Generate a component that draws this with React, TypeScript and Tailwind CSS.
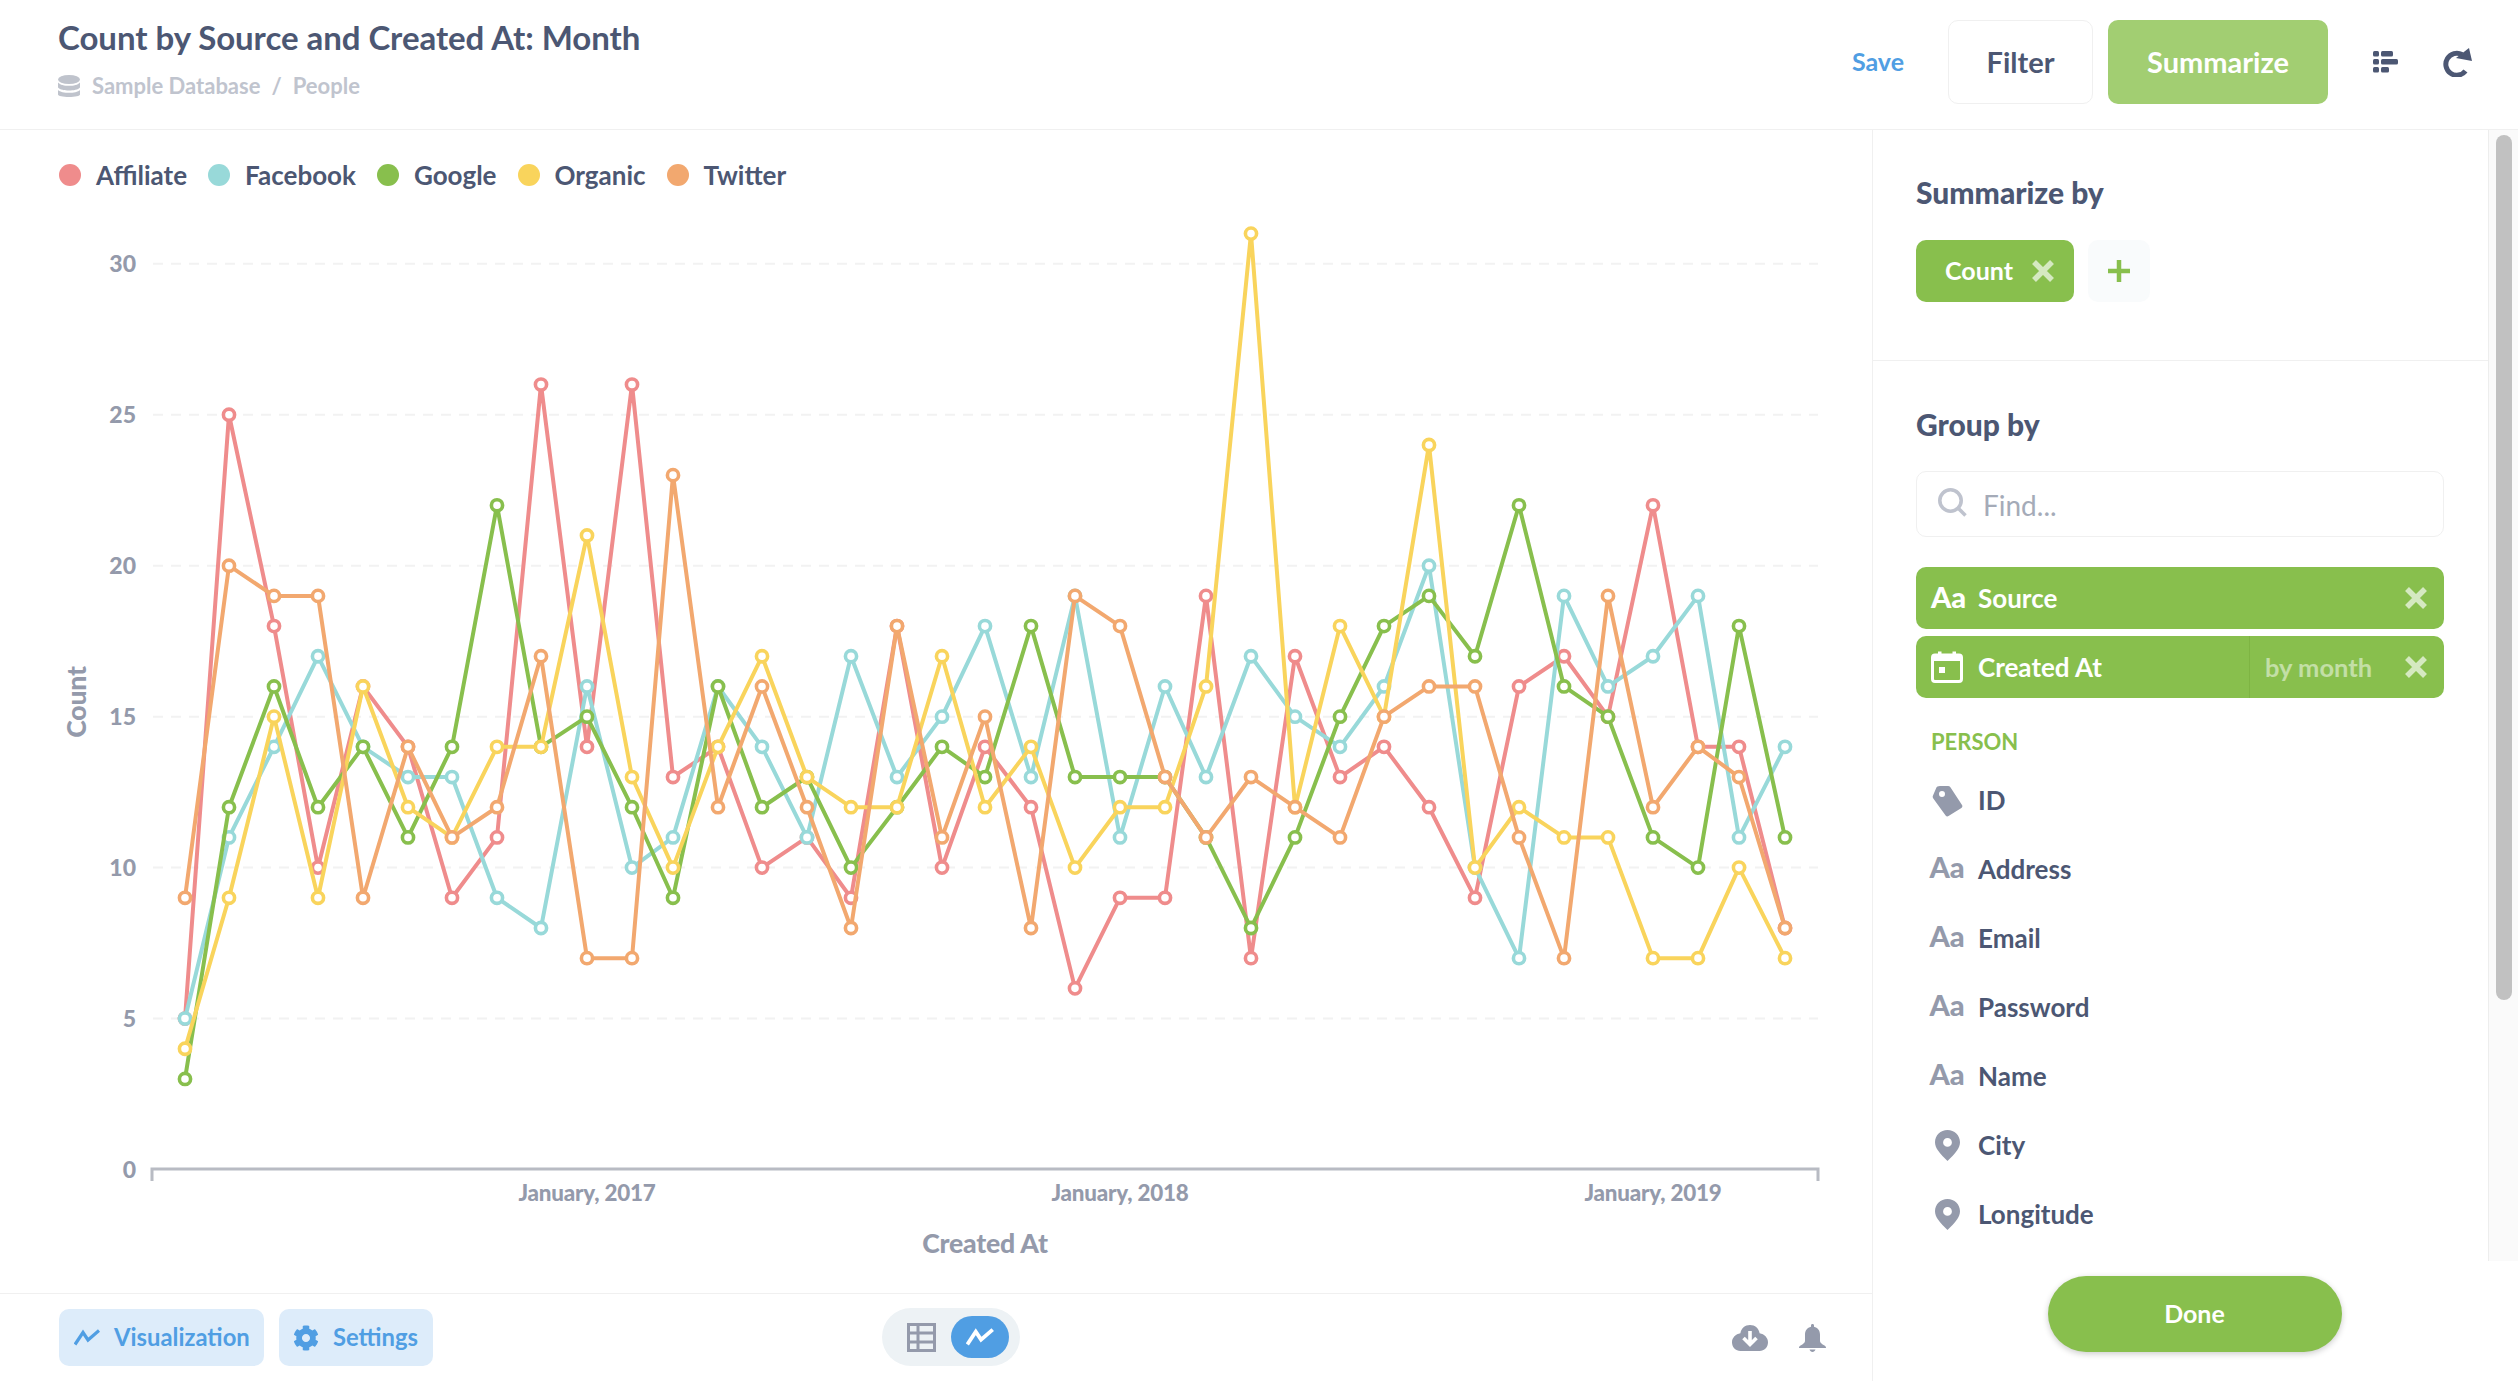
import React from "react";
import { FaCog } from "react-icons/fa";

const xs = [185,229,274,318,363,408,452,497,541,587,632,673,718,762,807,851,897,942,985,1031,1075,1120,1165,1206,1251,1295,1340,1384,1429,1475,1519,1564,1608,1653,1698,1739,1785];
const series = [
  { name: "Affiliate", color: "#EF8C8C", data: [5,25,18,10,16,14,9,11,26,14,26,13,14,10,11,9,18,10,14,12,6,9,9,19,7,17,13,14,12,9,16,17,15,22,14,14,8] },
  { name: "Facebook", color: "#98D9D9", data: [5,11,14,17,14,13,13,9,8,16,10,11,16,14,11,17,13,15,18,13,19,11,16,13,17,15,14,16,20,10,7,19,16,17,19,11,14] },
  { name: "Google", color: "#88BF4D", data: [3,12,16,12,14,11,14,22,14,15,12,9,16,12,13,10,12,14,13,18,13,13,13,11,8,11,15,18,19,17,22,16,15,11,10,18,11] },
  { name: "Organic", color: "#F9D45C", data: [4,9,15,9,16,12,11,14,14,21,13,10,14,17,13,12,12,17,12,14,10,12,12,16,31,12,18,15,24,10,12,11,11,7,7,10,7] },
  { name: "Twitter", color: "#F2A86F", data: [9,20,19,19,9,14,11,12,17,7,7,23,12,16,12,8,18,11,15,8,19,18,13,11,13,12,11,15,16,16,11,7,19,12,14,13,8] },
];
const yOf = (v: number) => 1169.5 - v * 30.19;

function Chart() {
  return (
    <svg className="block w-[1873px] h-[1073px]" viewBox="0 220 1873 1073">
      {[5, 10, 15, 20, 25, 30].map((v) => (
        <line key={v} x1={153} x2={1818} y1={yOf(v)} y2={yOf(v)} stroke="#F2F2F2" strokeWidth={2} strokeDasharray="10 8" />
      ))}
      {[0, 5, 10, 15, 20, 25, 30].map((v) => (
        <text key={v} x={136} y={yOf(v) + 8.5} textAnchor="end" fontSize={23} fontWeight={900} fill="#949AAB">{v}</text>
      ))}
      <path d="M152 1181 V1169 H1818 V1181" fill="none" stroke="#B8BBC3" strokeWidth={3} />
      {[["January, 2017", 587], ["January, 2018", 1120], ["January, 2019", 1653]].map(([t, x]) => (
        <text key={t as string} x={x as number} y={1201} textAnchor="middle" fontSize={22.4} fontWeight={900} fill="#949AAB" letterSpacing={-0.2}>{t}</text>
      ))}
      <text x={985} y={1253} textAnchor="middle" fontSize={26.6} fontWeight={900} fill="#949AAB" letterSpacing={-0.2}>Created At</text>
      <text transform="translate(86 702) rotate(-90)" textAnchor="middle" fontSize={26.6} fontWeight={900} fill="#949AAB" letterSpacing={-0.2}>Count</text>
      {series.map((s) => (
        <g key={s.name}>
          <polyline points={s.data.map((v, i) => `${xs[i]},${yOf(v)}`).join(" ")} fill="none" stroke={s.color} strokeWidth={4} strokeLinejoin="round" />
          {s.data.map((v, i) => (
            <circle key={i} cx={xs[i]} cy={yOf(v)} r={5.6} fill="#fff" stroke={s.color} strokeWidth={3.6} />
          ))}
        </g>
      ))}
    </svg>
  );
}

function Cross({ className = "" }: { className?: string }) {
  return (
    <svg viewBox="0 0 22 22" className={`w-[22px] h-[22px] shrink-0 ${className}`}>
      <path d="M2 2 L20 20 M20 2 L2 20" stroke="#fff" strokeOpacity={0.65} strokeWidth={5.5} fill="none" />
    </svg>
  );
}

function Pin() {
  return (
    <svg viewBox="0 0 25 31" className="w-[25px] h-[31px]">
      <path fillRule="evenodd" fill="#949AAB" d="M12.5 0C5.6 0 0 5.4 0 12.2c0 3.2 1.4 6 3 8.3 2.5 3.6 6.3 7.4 9.5 10.5 3.2-3.1 7-6.9 9.5-10.5 1.6-2.3 3-5.1 3-8.3C25 5.4 19.4 0 12.5 0zm0 8a4.4 4.4 0 1 1 0 8.8 4.4 4.4 0 0 1 0-8.8z" />
    </svg>
  );
}

function Tag() {
  return (
    <svg viewBox="0 0 32 32" className="w-[32px] h-[32px]">
      <path fillRule="evenodd" fill="#949AAB" d="M9 1h8c1 0 1.8.4 2.4 1.2L31 20c.7 1 .5 2.2-.6 2.9L17.5 31c-1 .7-2.2.4-2.9-.6L2.3 13.4C1.7 12.6 1.6 12 1.8 11L5 3.4C5.6 1.800 7 1 9 1zm2 5a3 3 0 1 0 0 6 3 3 0 0 0 0-6z" />
    </svg>
  );
}

function Aa({ white = false }: { white?: boolean }) {
  return <span className={`text-[29px] leading-none font-black -mt-[6px] ${white ? "text-white" : "text-[#949AAB]"}`}>Aa</span>;
}

const rows: [string, "aa" | "pin" | "tag"][] = [
  ["ID", "tag"],
  ["Address", "aa"],
  ["Email", "aa"],
  ["Password", "aa"],
  ["Name", "aa"],
  ["City", "pin"],
  ["Longitude", "pin"],
];

export default function App() {
  return (
    <div className="w-[2518px] h-[1381px] flex flex-col overflow-hidden bg-white text-[#4C5773] font-[Lato,sans-serif]">
      <header className="h-[130px] shrink-0 border-b border-[#F0F0F0] flex items-center pl-[58px]">
        <div className="flex flex-col -mt-[12px]">
          <h1 className="text-[33px] leading-[40px] font-bold tracking-[-0.05px]">Count by Source and Created At: Month</h1>
          <div className="flex items-center mt-[15px] text-[22px] leading-[28px] font-bold text-[#C0C4CE]">
            <svg viewBox="0 0 22 22" className="w-[22px] h-[22px] mr-[12px]">
              <ellipse cx="11" cy="4.500" rx="11" ry="4.500" fill="#BFC3CC" />
              <path d="M0 7.500c2 2.500 6.500 3.300 11 3.300s9-.8 11-3.300v5c-2 2.200-6.500 3-11 3s-9-.8-11-3z" fill="#BFC3CC" />
              <path d="M0 15c2 2 6.500 2.800 11 2.800S20 17 22 15v4.500c0 1.500-5 2.500-11 2.500S0 21 0 19.500z" fill="#BFC3CC" />
            </svg>
            <span>Sample Database</span>
            <span className="mx-[11px]">/</span>
            <span>People</span>
          </div>
        </div>
        <div className="ml-auto flex items-center pr-[46px] -mt-[5px]">
          <span className="text-[25px] font-bold text-[#509EE3] mr-[44px]">Save</span>
          <div className="w-[145px] h-[84px] rounded-[10px] border border-[#F0F0F0] flex items-center justify-center text-[29px] font-bold">Filter</div>
          <div className="w-[220px] h-[84px] rounded-[10px] bg-[#A2CE72] ml-[15px] flex items-center justify-center text-[29px] font-bold text-white">Summarize</div>
          <svg viewBox="0 0 25 22" className="w-[25px] h-[22px] ml-[45px]" fill="#4C5773">
            <rect x="0" y="0" width="6" height="5.500" rx="1.500" />
            <rect x="8" y="0" width="12" height="5.500" rx="1.500" />
            <rect x="0" y="8" width="6" height="5.500" rx="1.500" />
            <rect x="8" y="8" width="17" height="5.500" rx="1.500" />
            <rect x="0" y="16" width="6" height="5.500" rx="1.500" />
            <rect x="8" y="16" width="8" height="5.500" rx="1.500" />
          </svg>
          <svg viewBox="0 0 29 29" className="w-[29px] h-[29px] ml-[45px]" fill="none">
            <path d="M19 6.500A11 11 0 1 0 22.500 23" stroke="#4C5773" strokeWidth={5} />
            <path d="M26 0 L29 13 L13 10 Z" fill="#4C5773" />
          </svg>
        </div>
      </header>

      <main className="flex flex-1 min-h-0">
        <section className="w-[1873px] shrink-0 border-r border-[#F0F0F0] flex flex-col">
          <div className="h-[90px] flex items-center pl-[59px] gap-[21px] text-[26px] font-bold">
            {series.map((s) => (
              <div key={s.name} className="flex items-center gap-[15px]">
                <span className="w-[22px] h-[22px] rounded-full" style={{ backgroundColor: s.color }} />
                <span>{s.name}</span>
              </div>
            ))}
          </div>
          <Chart />
          <div className="h-[88px] shrink-0 border-t border-[#F0F0F0] flex items-start pt-[15px] pl-[59px] pr-[46px]">
            <div className="w-[823px] flex gap-[15px]">
              <div className="w-[205px] h-[57px] rounded-[10px] bg-[#DDECFA] flex items-center pl-[15px] text-[#509EE3] text-[23.800px] font-bold">
                <svg viewBox="0 0 26 17" className="w-[26px] h-[17px] mr-[14px]" fill="none">
                  <path d="M1 15.500 L9 3.500 L14 11 L25 1.500" stroke="#509EE3" strokeWidth={3.200} />
                </svg>
                Visualization
              </div>
              <div className="w-[154px] h-[57px] rounded-[10px] bg-[#DDECFA] flex items-center pl-[14px] text-[#509EE3] text-[23.800px] font-bold">
                <FaCog className="w-[26px] h-[26px] mr-[14px]" />
                Settings
              </div>
            </div>
            <div className="w-[138px] h-[58px] -mt-[1px] rounded-[29px] bg-[#EDF2F5] flex items-center relative pl-[25px]">
              <svg viewBox="0 0 29 29" className="w-[29px] h-[29px]" fill="none" stroke="#949AAB" strokeWidth={3}>
                <rect x="1.500" y="1.500" width="26" height="26" />
                <path d="M1.500 10 H27.500 M1.500 19 H27.500 M11 1.500 V27.500" />
              </svg>
              <div className="w-[58px] h-[42px] rounded-[21px] bg-[#509EE3] flex items-center justify-center ml-[15px]">
                <svg viewBox="0 0 26 17" className="w-[28px] h-[18px]" fill="none">
                  <path d="M1 15.500 L9 3.500 L14 11 L25 1.500" stroke="#fff" strokeWidth={3.600} />
                </svg>
              </div>
            </div>
            <div className="ml-auto flex items-center gap-[31px] mt-[15px]">
              <svg viewBox="0 0 36 26" className="w-[36px] h-[26px]">
                <path fill="#949AAB" d="M18 0c5 0 9 3.500 9.600 8.200C32.300 9 36 12.700 36 17.200 36 22 32.400 26 27.500 26h-19C3.600 26 0 22 0 17.200 0 12.700 3.700 9 8.400 8.200 9 3.500 13 0 18 0z" />
                <path d="M18 6 V19 M11.500 13 L18 19.500 L24.500 13" stroke="#fff" strokeWidth={3.600} fill="none" />
              </svg>
              <svg viewBox="0 0 27 28" className="w-[27px] h-[28px]">
                <path fill="#949AAB" d="M13.500 0c1 0 1.500.7 1.500 1.500v1.300c3.700.8 6 3.800 6 8V17c0 1.700 1.800 3 4.500 4.500.9.500 1.500 1 1.500 2.500H0c0-1.500.6-2 1.500-2.500C4.200 20 6 18.700 6 17v-6.200c0-4.200 2.300-7.200 6-8V1.500c0-.8.500-1.500 1.500-1.500zM10.500 25.500h6c-.5 1.500-1.700 2.500-3 2.500s-2.500-1-3-2.500z" />
              </svg>
            </div>
          </div>
        </section>

        <aside className="flex-1 min-w-0 flex flex-col">
          <div className="h-[1131px] shrink-0 flex">
            <div className="w-[615px] shrink-0 overflow-hidden">
              <div className="h-[231px] border-b border-[#F0F0F0] pl-[43px] pt-[45px]">
                <div className="h-[34px] flex items-center text-[30px] font-black">Summarize by</div>
                <div className="flex items-center mt-[31px] gap-[14px]">
                  <div className="w-[158px] h-[62px] rounded-[10px] bg-[#88BF4D] flex items-center pl-[29px] text-white text-[25px] font-bold">
                    <span>Count</span>
                    <Cross className="ml-[19px]" />
                  </div>
                  <div className="w-[62px] h-[62px] rounded-[10px] bg-[#F9FBFC] flex items-center justify-center">
                    <svg viewBox="0 0 22 22" className="w-[22px] h-[22px]">
                      <path d="M11 0 V22 M0 11 H22" stroke="#88BF4D" strokeWidth={4.500} />
                    </svg>
                  </div>
                </div>
              </div>
              <div className="pl-[43px] pt-[46px]">
                <div className="h-[34px] flex items-center text-[30px] font-black">Group by</div>
                <div className="w-[528px] h-[66px] mt-[30px] rounded-[10px] border border-[#F0F0F0] flex items-center pl-[21px] text-[28px] text-[#A5ABB8]">
                  <svg viewBox="0 0 29 29" className="w-[29px] h-[29px] mr-[16px] -mt-[4px]" fill="none" stroke="#BFC3CE" strokeWidth={3.600}>
                    <circle cx="12.500" cy="12.500" r="10.700" />
                    <path d="M20 20 L27.500 27.500" />
                  </svg>
                  <span className="mt-[2px]">Find...</span>
                </div>
                <div className="w-[528px] h-[62px] mt-[30px] rounded-[10px] bg-[#88BF4D] flex items-center pl-[15px] pr-[17px] text-white text-[26px] font-bold">
                  <span className="w-[32px] mr-[15px]"><Aa white /></span>
                  <span>Source</span>
                  <Cross className="ml-auto" />
                </div>
                <div className="w-[528px] h-[62px] mt-[7px] rounded-[10px] bg-[#88BF4D] flex items-center pl-[15px] pr-[17px] text-white text-[26px] font-bold">
                  <svg viewBox="0 0 32 32" className="w-[32px] h-[32px] mr-[15px]" fill="none">
                    <rect x="1.500" y="4" width="29" height="26.500" rx="2.500" stroke="#fff" strokeWidth={3} />
                    <rect x="1.500" y="4" width="29" height="6" fill="#fff" />
                    <rect x="7" y="0.500" width="3.500" height="5" fill="#fff" />
                    <rect x="21.500" y="0.500" width="3.500" height="5" fill="#fff" />
                    <rect x="8" y="16" width="6" height="6" fill="#fff" />
                  </svg>
                  <span className="flex-1">Created At</span>
                  <div className="h-[62px] w-[178px] border-l border-[#7EB443] flex items-center pl-[15px] text-[25.500px] font-bold">
                    <span className="text-white/50">by month</span>
                    <Cross className="ml-auto" />
                  </div>
                </div>
                <div className="h-[24px] mt-[31px] pl-[15px] flex items-center text-[#88BF4D] text-[22px] font-bold">PERSON</div>
                <div className="mt-[13px]">
                  {rows.map(([label, icon]) => (
                    <div key={label} className="h-[69px] flex items-center pl-[15px] text-[26px] font-bold">
                      <span className="w-[32px] mr-[15px] flex justify-center">
                        {icon === "aa" ? <Aa /> : icon === "pin" ? <Pin /> : <Tag />}
                      </span>
                      <span>{label}</span>
                    </div>
                  ))}
                </div>
              </div>
            </div>
            <div className="flex-1 bg-[#FAFAFA] border-l border-[#EDEDED] pl-[7px] pt-[5px]">
              <div className="w-[16px] h-[865px] rounded-[8px] bg-[#C1C1C1]" />
            </div>
          </div>
          <div className="flex-1 flex justify-center pt-[15px] pr-[2px]">
            <div className="w-[294px] h-[76px] rounded-[38px] bg-[#88BF4D] shadow-[0_2px_6px_rgba(0,0,0,0.2)] flex items-center justify-center text-white text-[25px] font-bold">Done</div>
          </div>
        </aside>
      </main>
    </div>
  );
}
